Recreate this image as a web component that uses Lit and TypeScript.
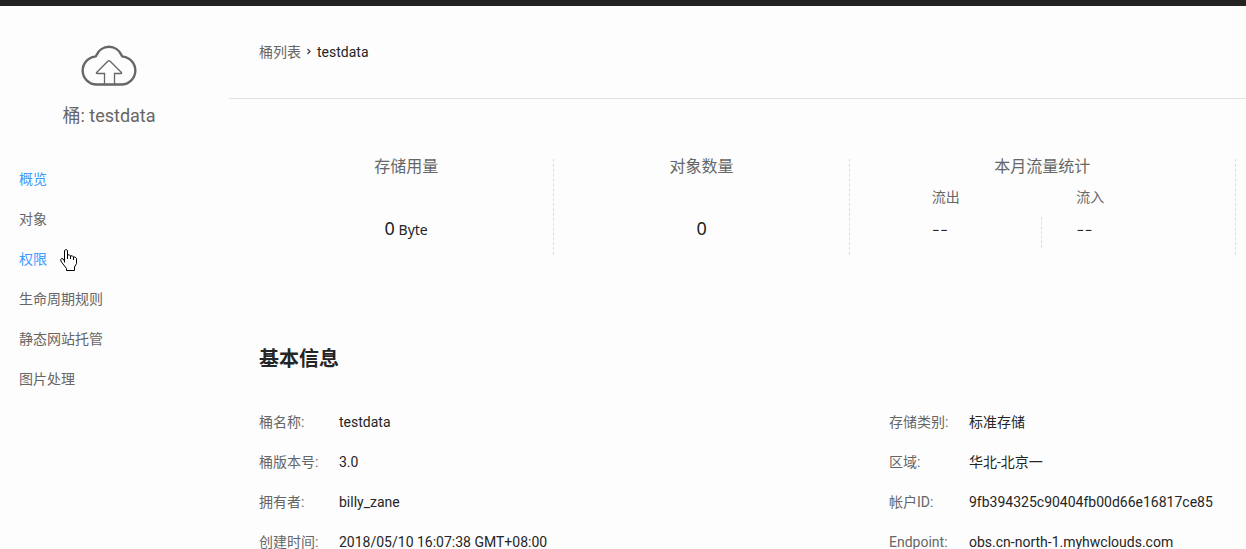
import { LitElement, html, css, svg } from "lit";
import { customElement } from "lit/decorators.js";

const NAV = [
  { text: "概览", active: true },
  { text: "对象", active: false },
  { text: "权限", active: true, pointer: true },
  { text: "生命周期规则", active: false },
  { text: "静态网站托管", active: false },
  { text: "图片处理", active: false },
];

const INFO = [
  [
    ["桶名称:", "testdata"],
    ["桶版本号:", "3.0"],
    ["拥有者:", "billy_zane"],
    ["创建时间:", "2018/05/10 16:07:38 GMT+08:00"],
  ],
  [
    ["存储类别:", "标准存储"],
    ["区域:", "华北-北京一"],
    ["帐户ID:", "9fb394325c90404fb00d66e16817ce85"],
    ["Endpoint:", "obs.cn-north-1.myhwclouds.com"],
  ],
];

const cloud = svg`
  <path d="M15.5 39.5 A14 14 0 0 1 14 11.6 Q15 11.500 15.400 10.300 A13.600 13.600 0 0 1 40.600 10.300 Q41 11.500 42 11.600 A14 14 0 0 1 40.500 39.500 Z" fill="none" stroke="#666" stroke-width="2.4" stroke-linejoin="round"/>
  <path d="M23.500 39 V28.500 H16.500 Q14.500 28.500 15.800 27.200 L26.800 16.200 Q28 15 29.200 16.200 L40.200 27.200 Q41.500 28.500 39.500 28.500 H33.500 V39" fill="none" stroke="#666" stroke-width="1.3"/>`;

@customElement("app-root")
export class AppRoot extends LitElement {
  static styles = css`
    :host {
      display: block;
      min-height: 100vh;
      box-sizing: border-box;
      border-top: 6px solid #232323;
      background: #fdfdfd;
      color: #252525;
      font: 14px/20px Roboto, "Noto Sans CJK SC", sans-serif;
    }
    * { box-sizing: border-box; }
    h1, h2, h3, p, ul, dl, dd { margin: 0; padding: 0; }
    a { color: #666; text-decoration: none; }
    .page { display: flex; }
    .side { flex: 0 0 229px; }
    .bucket { display: flex; flex-direction: column; align-items: center; width: 218px; padding-top: 39px; gap: 19px; }
    .cloud { display: block; width: 56px; height: 42px; }
    .name { font-size: 18px; line-height: 20px; font-weight: 400; color: #666; }
    .nav { list-style: none; margin-top: 33px; padding-left: 19px; }
    .item { display: flex; height: 40px; line-height: 40px; }
    .link.active { color: #3d9bff; }
    .pointer-box { position: relative; }
    .pointer { position: absolute; left: 13px; top: 10px; width: 17px; height: 22px; }
    .main { flex: 1; min-width: 0; }
    .crumbs { display: flex; gap: 5px; height: 93px; padding: 36px 30px 0; border-bottom: 1px solid #e3e3e3; }
    .chev { width: 6px; height: 20px; }
    .stats { display: grid; grid-template-columns: 13fr 13fr 17fr; margin: 60px 10px 0 30px; }
    .stat { height: 96px; text-align: center; border-right: 1px dashed #ddd; }
    .title { font-size: 16px; line-height: 16px; font-weight: 400; color: #666; }
    .value { margin-top: 43px; line-height: 20px; font-family: "Noto Sans", sans-serif; }
    .num { font-size: 18px; }
    .flows { display: grid; grid-template-columns: 1fr 1fr; margin-top: 12px; text-align: left; }
    .out { padding-left: 82px; }
    .in { padding-left: 34px; }
    .label { color: #666; }
    .dash { height: 31px; margin-top: 10px; padding-top: 3px; line-height: 20px; font-size: 18px; font-weight: 300; font-family: Inter, sans-serif; }
    .out .dash { border-right: 1px dashed #ddd; }
    .heading { margin: 92px 0 0 30px; font-size: 20px; line-height: 24px; font-weight: 700; color: #252525; }
    .info { display: grid; grid-template-columns: 630px 1fr; margin: 31px 0 0 30px; }
    .row { display: flex; height: 40px; line-height: 40px; white-space: nowrap; }
    .key { flex: 0 0 80px; color: #666; }
    @media (max-width: 1100px) { .info { grid-template-columns: 1fr; } }
  `;

  render() {
    return html`
      <div class="page">
        <aside class="side">
          <div class="bucket">
            <svg class="cloud" viewBox="0 0 56 42" aria-hidden="true">${cloud}</svg>
            <h1 class="name">桶: testdata</h1>
          </div>
          <ul class="nav">
            ${NAV.map((n) => html`<li class="item">
              <a class="link ${n.active ? "active" : ""}" href="#">${n.text}</a>
              ${n.pointer
                ? html`<span class="pointer-box"><svg class="pointer" viewBox="0 0 17 22" aria-hidden="true">
                    <path d="M4.500 13.500 V1.500 Q6 -0.500 7.500 1.500 V6 Q9.500 5 10.500 7 Q12.500 6 13.500 8 Q15.500 7.500 16.500 9.500 V14.500 L14.500 18 V21.500 H6.500 V19.500 L1.500 13 Q-0.500 10.500 1.500 9.500 Q3 9 4.500 12" fill="#fff" stroke="#000"/>
                    <path d="M7.500 6 V10 M10.500 7 V10 M13.500 8 V11" stroke="#000"/>
                  </svg></span>`
                : ""}
            </li>`)}
          </ul>
        </aside>
        <main class="main">
          <nav class="crumbs">
            <a href="#">桶列表</a>
            <svg class="chev" viewBox="0 0 6 20" aria-hidden="true"><path d="M1.500 7 L4 9.500 L1.500 12" fill="none" stroke="#444" stroke-width="1.300"/></svg>
            <span>testdata</span>
          </nav>
          <section class="stats">
            <div class="stat">
              <h3 class="title">存储用量</h3>
              <p class="value"><span class="num">0</span> Byte</p>
            </div>
            <div class="stat">
              <h3 class="title">对象数量</h3>
              <p class="value"><span class="num">0</span></p>
            </div>
            <div class="stat">
              <h3 class="title">本月流量统计</h3>
              <div class="flows">
                <div class="out"><p class="label">流出</p><p class="dash">--</p></div>
                <div class="in"><p class="label">流入</p><p class="dash">--</p></div>
              </div>
            </div>
          </section>
          <h2 class="heading">基本信息</h2>
          <section class="info">
            ${INFO.map((col) => html`<dl>
              ${col.map(([k, v]) => html`<div class="row"><dt class="key">${k}</dt><dd>${v}</dd></div>`)}
            </dl>`)}
          </section>
        </main>
      </div>`;
  }
}
